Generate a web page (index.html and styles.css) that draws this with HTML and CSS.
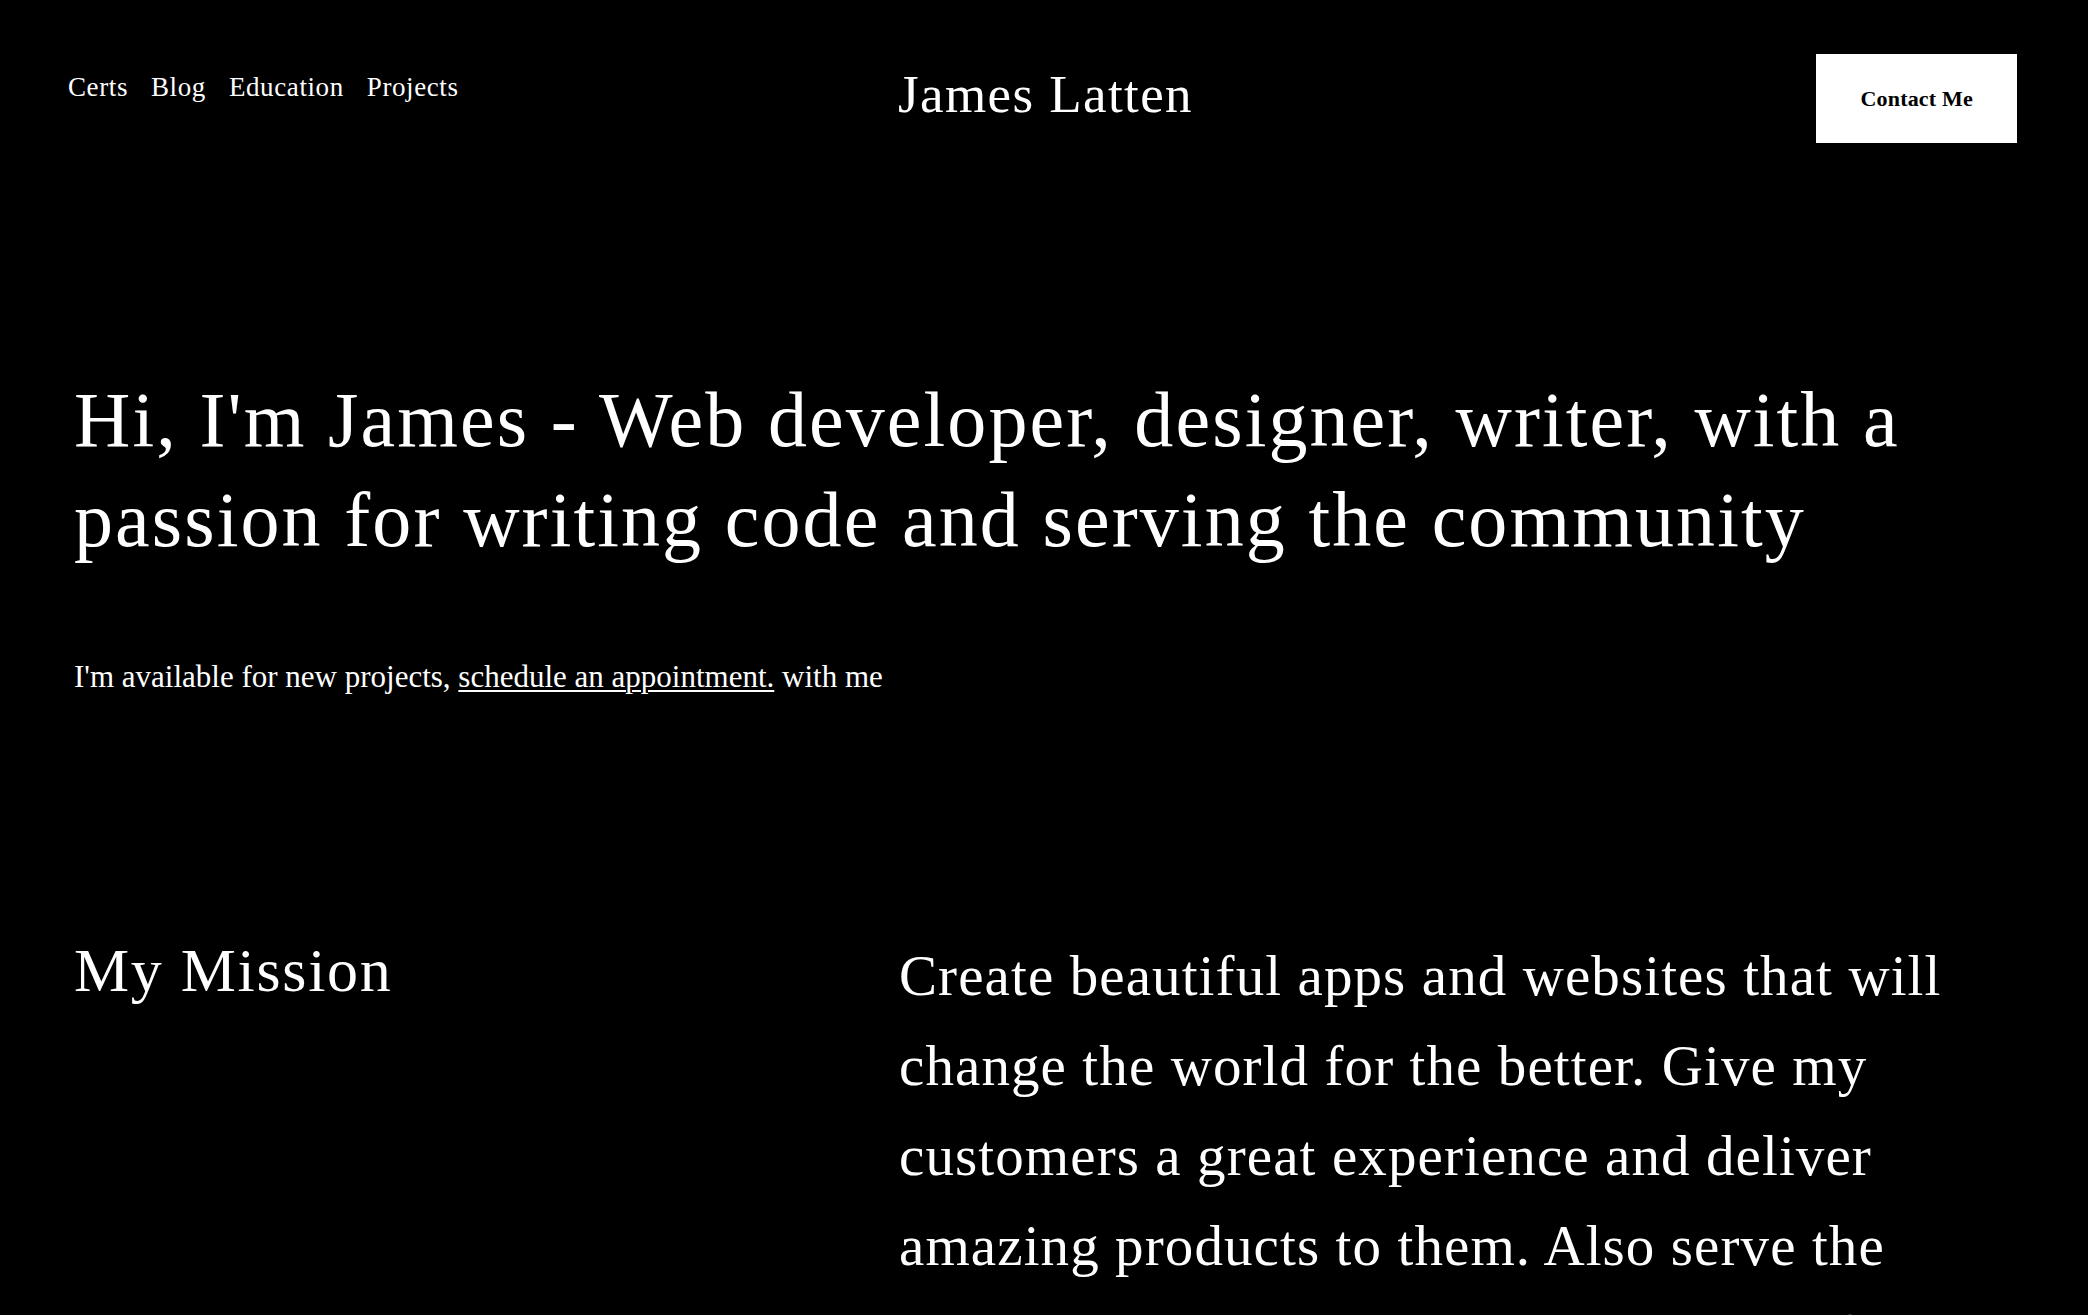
FILE: index.html
```html
<!DOCTYPE html>
<html lang="en">
<head>
<meta charset="utf-8">
<title>James Latten</title>
<link rel="stylesheet" href="styles.css">
</head>
<body>
<header class="site-header">
  <nav class="nav">
    <a href="#" class="nav-link">Certs</a>
    <a href="#" class="nav-link">Blog</a>
    <a href="#" class="nav-link">Education</a>
    <a href="#" class="nav-link">Projects</a>
  </nav>
  <a href="#" class="logo">James Latten</a>
  <a href="#" class="contact-btn">Contact Me</a>
</header>
<main class="main">
  <section class="hero">
    <h1 class="hero-title">Hi, I'm James - Web developer, designer, writer, with a passion for writing code and serving the community</h1>
    <p class="hero-sub">I'm available for new projects, <a href="#" class="hero-link">schedule an appointment.</a> with me</p>
  </section>
  <section class="mission">
    <h2 class="mission-title">My Mission</h2>
    <p class="mission-text">Create beautiful apps and websites that will change the world for the better. Give my customers a great experience and deliver amazing products to them. Also serve the community as our common resources of all people.</p>
  </section>
</main>
</body>
</html>
```
FILE: styles.css
```css
* { box-sizing: border-box; }
html, body {
  margin: 0;
  padding: 0;
  background: #000;
  color: #fff;
  font-family: "Liberation Serif", "Times New Roman", serif;
}
a { color: inherit; text-decoration: none; }

.site-header {
  display: grid;
  grid-template-columns: 1fr auto 1fr;
  align-items: start;
  padding: 54px 71px 0 68px;
}
.nav {
  display: flex;
  gap: 23px;
  margin-top: 17px;
}
.nav-link {
  font-size: 27px;
  line-height: 1.2;
  letter-spacing: 0.6px;
}
.logo {
  font-size: 53px;
  line-height: 1.2;
  letter-spacing: 1.4px;
  margin-top: 9px;
  padding-left: 6px;
}
.contact-btn {
  justify-self: end;
  background: #fff;
  color: #000;
  font-weight: bold;
  font-size: 22px;
  line-height: 1;
  letter-spacing: 0.2px;
  padding: 33.5px 44px;
}

.main {
  padding: 0 75px 0 74px;
}
.hero {
  padding-top: 227px;
}
.hero-title {
  margin: 0;
  font-weight: normal;
  font-size: 78px;
  line-height: 100px;
  letter-spacing: 2.1px;
}
.hero-sub {
  margin: 84px 0 0;
  font-size: 31px;
  line-height: 46.5px;
}
.hero-link {
  text-decoration: underline;
  text-decoration-thickness: 2px;
  text-underline-offset: 3px;
}

.mission {
  display: grid;
  grid-template-columns: 825px 1114px;
  margin-top: 230px;
}
.mission-title {
  margin: 2px 0 0;
  font-weight: normal;
  font-size: 62px;
  line-height: 74px;
  letter-spacing: 1.7px;
}
.mission-text {
  margin: 0;
  font-size: 57px;
  line-height: 90px;
  letter-spacing: 1.1px;
}
```
